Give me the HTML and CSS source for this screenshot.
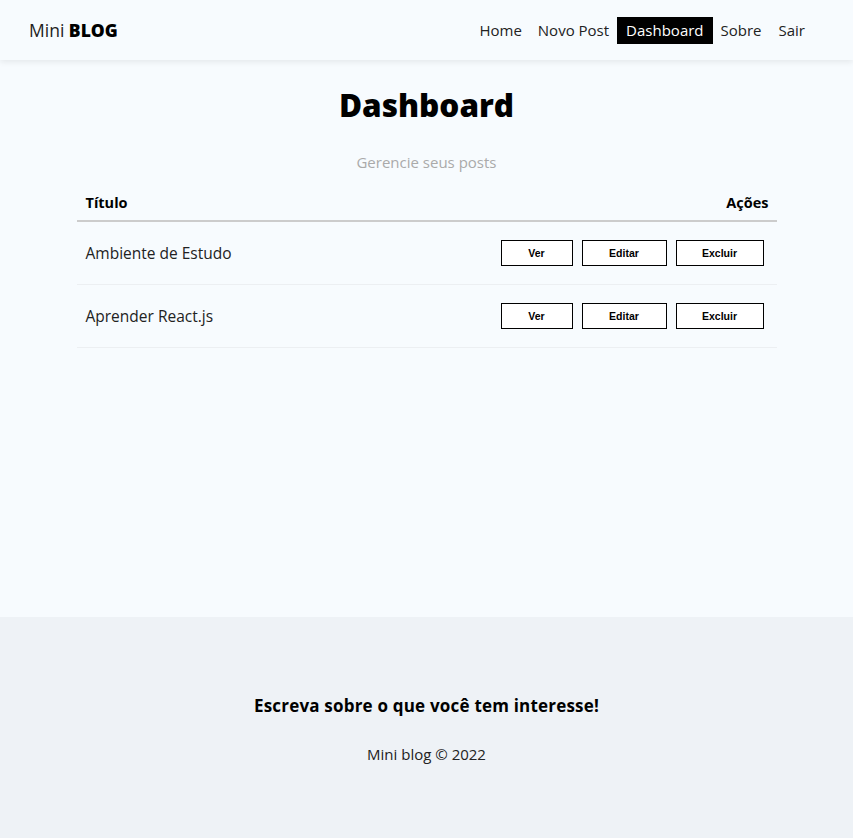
FILE: index.html
```html
<!DOCTYPE html>
<html lang="pt-BR">
<head>
<meta charset="utf-8">
<title>Mini Blog</title>
<link rel="stylesheet" href="styles.css">
</head>
<body>
<header class="navbar">
  <a class="brand" href="#">Mini <span class="brand-bold">BLOG</span></a>
  <nav class="links">
    <a href="#" class="link">Home</a>
    <a href="#" class="link">Novo Post</a>
    <a href="#" class="link active">Dashboard</a>
    <a href="#" class="link">Sobre</a>
    <a href="#" class="link">Sair</a>
  </nav>
</header>
<main class="main">
  <h2 class="title">Dashboard</h2>
  <p class="subtitle">Gerencie seus posts</p>
  <div class="table">
    <div class="row head">
      <span>Título</span>
      <span>Ações</span>
    </div>
    <div class="row">
      <p class="post-title">Ambiente de Estudo</p>
      <div class="actions">
        <a href="#" class="btn btn-ver">Ver</a>
        <a href="#" class="btn btn-edit">Editar</a>
        <button class="btn btn-del">Excluir</button>
      </div>
    </div>
    <div class="row">
      <p class="post-title">Aprender React.js</p>
      <div class="actions">
        <a href="#" class="btn btn-ver">Ver</a>
        <a href="#" class="btn btn-edit">Editar</a>
        <button class="btn btn-del">Excluir</button>
      </div>
    </div>
  </div>
</main>
<footer class="footer">
  <h3 class="footer-title">Escreva sobre o que você tem interesse!</h3>
  <p class="footer-copy">Mini blog &copy; 2022</p>
</footer>
</body>
</html>
```
FILE: styles.css
```css
* { box-sizing: border-box; }
body {
  margin: 0;
  min-height: 100vh;
  display: flex;
  flex-direction: column;
  background: #f7fbfe;
  font-family: "Open Sans", "DejaVu Sans", sans-serif;
  color: #000;
}
a { color: inherit; text-decoration: none; }

.navbar {
  height: 60px;
  display: flex;
  justify-content: space-between;
  align-items: center;
  padding: 0 39px 0 29px;
  box-shadow: 0 2px 6px rgba(0,0,0,0.08);
  background: #f7fbfe;
}
.brand { font-size: 17.5px; color: #222; }
.brand-bold { font-weight: 800; color: #000; }
.links { display: flex; align-items: center; }
.link {
  font-size: 15px;
  padding: 4px 9px;
  line-height: 19px;
  color: #222;
}
.link + .link { margin-left: -1px; }
.link:first-child { margin-right: -1px; }
.link.active { background: #000; color: #fff; }

.main {
  flex: 1;
  display: flex;
  flex-direction: column;
  align-items: center;
  padding-top: 24px;
}
.title {
  font-size: 31.5px;
  font-weight: 800;
  margin: 0;
  line-height: 42px;
}
.subtitle {
  color: #aaa;
  font-size: 15px;
  margin: 26px 0 14px;
  line-height: 20px;
}
.table { width: 700px; }
.row {
  display: flex;
  justify-content: space-between;
  align-items: center;
  height: 63px;
  border-bottom: 1px solid #eceff2;
  padding: 0 13px 0 9px;
}
.row.head {
  height: 36px;
  border-bottom: 2px solid #ccc;
  font-weight: 700;
  font-size: 14.5px;
  padding: 0 8px 2px 9px;
}
.post-title { margin: 0; font-size: 15.5px; color: #222; }
.actions { display: flex; gap: 9px; }
.btn {
  display: flex;
  align-items: center;
  justify-content: center;
  height: 26px;
  border: 1px solid #000;
  background: #fff;
  font-family: "Liberation Sans", Arial, sans-serif;
  font-weight: 700;
  font-size: 10.5px;
  color: #000;
  padding: 0;
}
.btn-ver { width: 72px; }
.btn-edit { width: 85px; }
.btn-del { width: 88px; }

.footer {
  height: 221px;
  background: #eef2f6;
  display: flex;
  flex-direction: column;
  align-items: center;
  padding-top: 78px;
}
.footer-title {
  margin: 0;
  font-size: 17px;
  font-weight: 700;
  letter-spacing: 0.2px;
  line-height: 22px;
}
.footer-copy {
  margin: 27px 0 0;
  font-size: 15px;
  color: #222;
  line-height: 20px;
}
```
